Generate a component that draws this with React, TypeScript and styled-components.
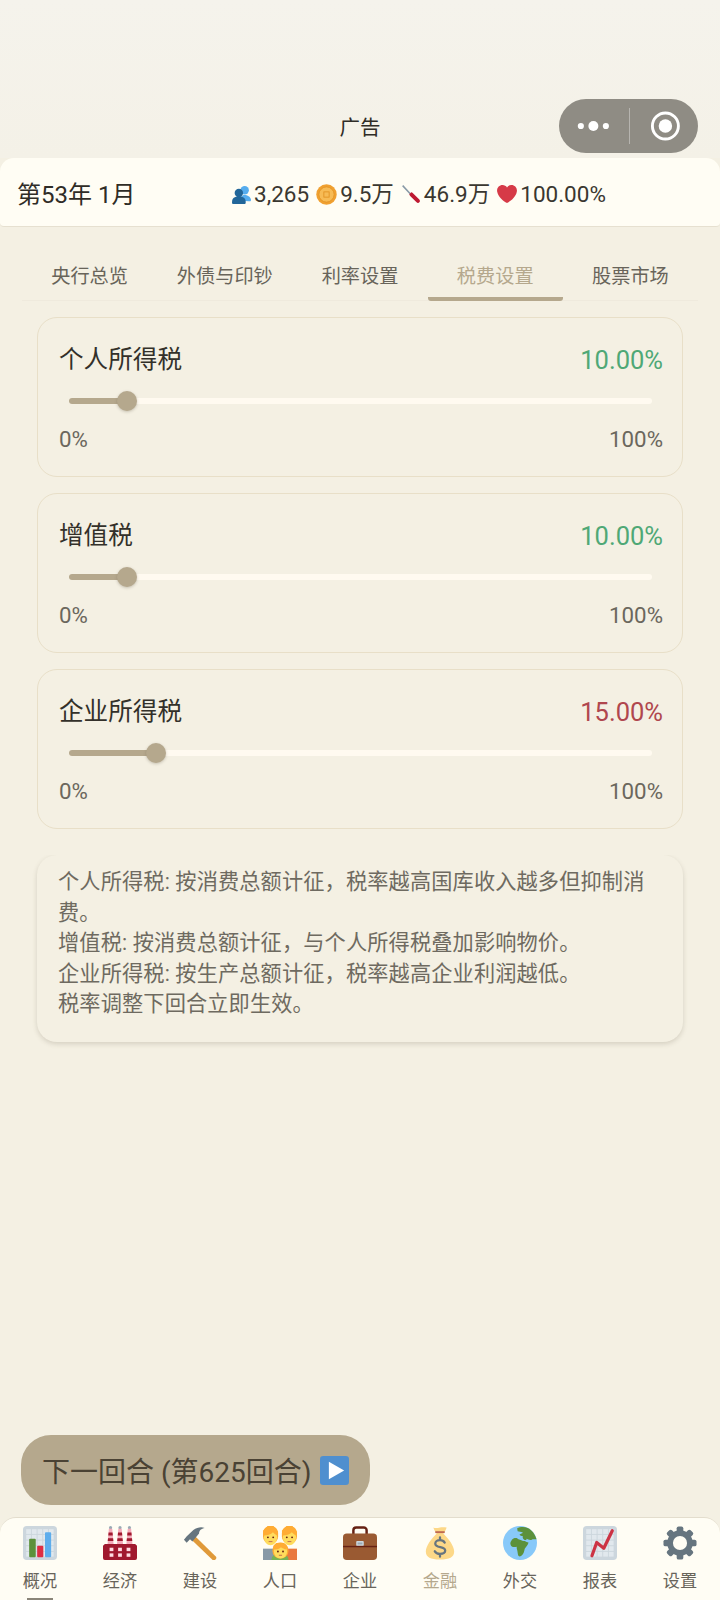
import React from "react";
import styled, { createGlobalStyle } from "styled-components";

const GlobalStyle = createGlobalStyle`
  html, body {
    margin: 0;
    padding: 0;
    background: #f4f0e3;
    font-family: Roboto, "Noto Sans CJK SC", sans-serif;
  }
  * { box-sizing: border-box; }
`;

const Page = styled.div`
  width: 720px;
  height: 1600px;
  display: flex;
  flex-direction: column;
  overflow: hidden;
  background: #f4f0e3;
`;

const TopBar = styled.header`
  display: grid;
  grid-template-columns: 1fr auto 1fr;
  align-items: center;
  height: 158px;
  padding: 99px 22px 5px;
  background: linear-gradient(#f5f3ec, #f4f1e7);
`;

const TopTitle = styled.div`
  grid-column: 2;
  font-size: 20.5px;
  color: #2f2c26;
`;

const Capsule = styled.div`
  grid-column: 3;
  justify-self: end;
  width: 139px;
  height: 54px;
  border-radius: 27px;
  background: #8f8c84;
  display: flex;
  align-items: center;
  padding: 0 17px 0 18px;
`;

const CapsuleDivider = styled.span`
  width: 1.5px;
  height: 36px;
  margin: 0 20px 0 19px;
  background: rgba(255, 255, 255, 0.35);
`;

const StatusBar = styled.div`
  height: 69px;
  display: flex;
  align-items: center;
  padding: 0 17px;
  background: #fffdf4;
  border-radius: 14px 14px 4px 4px;
  border-bottom: 1.5px solid #e6e0d0;
`;

const DateLabel = styled.div`
  font-size: 24px;
  color: #2f2c26;
  width: 118px;
  white-space: nowrap;
`;

const Stats = styled.div`
  flex: 1;
  display: flex;
  justify-content: center;
  gap: 7px;
  padding-top: 4px;
`;

const Stat = styled.div`
  display: flex;
  align-items: center;
  gap: 3px;
  font-size: 22.5px;
  line-height: 28px;
  color: #3a3730;
`;

const Tabs = styled.nav`
  display: flex;
  margin: 28px 22px 0;
  border-bottom: 1px solid #efeadd;
`;

const Tab = styled.div<{ $active?: boolean }>`
  flex: 1;
  height: 46px;
  padding-top: 7px;
  text-align: center;
  font-size: 19.2px;
  line-height: 30px;
  color: ${(p) => (p.$active ? "#b5a88d" : "#68645a")};
  border-bottom: 4px solid ${(p) => (p.$active ? "#b5a88d" : "transparent")};
  border-radius: 0 0 3px 3px;
  margin-bottom: -1px;
`;

const Cards = styled.div`
  display: flex;
  flex-direction: column;
  gap: 16px;
  margin: 16px 37px 0;
`;

const TaxCard = styled.section`
  height: 160px;
  padding: 24px 19px 0 21px;
  border: 1.5px solid #e8dfc8;
  border-radius: 20px;
`;

const TaxHeader = styled.div`
  display: flex;
  justify-content: space-between;
  align-items: center;
  height: 36px;
  font-size: 24.6px;
  line-height: 36px;
  color: #33302a;
`;

const TaxValue = styled.span<{ $color: string }>`
  color: ${(p) => p.$color};
  font-size: 25.5px;
`;

const Slider = styled.div`
  position: relative;
  height: 6px;
  margin: 20px 11px 0 10px;
  border-radius: 3px;
  background: #fffaf0;
`;

const SliderFill = styled.div`
  height: 100%;
  border-radius: 3px;
  background: #b5a88d;
`;

const SliderThumb = styled.div`
  position: absolute;
  top: -7px;
  width: 20px;
  height: 20px;
  margin-left: -10px;
  border-radius: 50%;
  background: #b5a88d;
  box-shadow: 0 1px 3px rgba(90, 80, 60, 0.3);
`;

const Range = styled.div`
  display: flex;
  justify-content: space-between;
  margin-top: 19px;
  font-size: 22.3px;
  line-height: 32px;
  color: #6b675d;
`;

const Note = styled.section`
  margin: 26px 37px 0;
  padding: 12px 21px 18px;
  height: 187px;
  border-radius: 20px;
  font-size: 21.2px;
  letter-spacing: 0.14px;
  line-height: 30.6px;
  color: #6e6a60;
  box-shadow: 0 2px 5px rgba(90, 80, 60, 0.2);
  clip-path: inset(0 -10px -12px -10px);
`;

const Spacer = styled.div`
  flex: 1;
`;

const NextButton = styled.button`
  align-self: flex-start;
  display: flex;
  align-items: center;
  gap: 8px;
  height: 70px;
  width: 349px;
  margin: 0 0 12px 21px;
  padding: 0 0 0 21px;
  border: none;
  border-radius: 30px;
  background: #b5a88d;
  color: #4a4234;
  font-family: inherit;
  font-size: 28px;
  white-space: nowrap;
`;

const BottomNav = styled.nav`
  height: 83px;
  display: grid;
  grid-template-columns: repeat(9, 1fr);
  background: #fffdf4;
  border-top: 1.5px solid #e3ddcd;
  border-radius: 16px 16px 0 0;
`;

const NavItem = styled.div<{ $active?: boolean; $marked?: boolean }>`
  position: relative;
  display: flex;
  flex-direction: column;
  align-items: center;
  padding-top: 8px;
  font-size: 17.2px;
  color: ${(p) => (p.$active ? "#b5a88d" : "#68645a")};
  &::after {
    content: "";
    display: ${(p) => (p.$marked ? "block" : "none")};
    position: absolute;
    left: 27px;
    right: 27px;
    bottom: 0;
    height: 2px;
    background: #8a8578;
  }
`;

const NavLabel = styled.span`
  margin-top: 9px;
  line-height: 24px;
`;

function Dots() {
  return (
    <svg width="34" height="14" viewBox="0 0 34 14">
      <circle cx="4" cy="7" r="3.2" fill="#fff" />
      <circle cx="17" cy="7" r="5.2" fill="#fff" />
      <circle cx="30" cy="7" r="3.2" fill="#fff" />
    </svg>
  );
}

function Target() {
  return (
    <svg width="32" height="32" viewBox="0 0 32 32">
      <circle cx="16" cy="16" r="13.5" fill="none" stroke="#fff" strokeWidth="3" />
      <circle cx="16" cy="16" r="7" fill="#fff" />
    </svg>
  );
}

const Emoji = ({ size, children }: { size: number; children: React.ReactNode }) => (
  <svg width={size} height={size} viewBox="0 0 36 36">
    {children}
  </svg>
);

function GridBg() {
  const cells = [];
  for (let x = 0; x < 5; x++) {
    for (let y = 0; y < 5; y++) {
      cells.push(<rect key={`${x}-${y}`} x={3.4 + x * 6} y={3.4 + y * 6} width="5" height="5" fill="#e1e8ed" />);
    }
  }
  return (
    <>
      <rect width="36" height="36" rx="4" fill="#ccd6dd" />
      {cells}
    </>
  );
}

const BarChartIcon = () => (
  <Emoji size={34}>
    <GridBg />
    <rect x="6.5" y="13.5" width="7" height="19.5" rx="1" fill="#5c913b" />
    <rect x="15" y="21" width="6.5" height="12" rx="1" fill="#dd2e44" />
    <rect x="23.3" y="6.5" width="6.5" height="26.5" rx="1" fill="#5dadec" />
  </Emoji>
);

const FactoryIcon = () => (
  <Emoji size={34}>
    {[8, 18, 28].map((x) => (
      <g key={x}>
        <circle cx={x} cy="1.8" r="1.7" fill="#99aab5" />
        <path d={`M${x - 1.8} 3h3.6l1.4 16h-6.4z`} fill="#f4abba" />
        <path d={`M${x - 2.1} 7h4.2l.3 3h-4.8zM${x - 2.7} 13h5.4l.3 3h-6z`} fill="#a0192e" />
      </g>
    ))}
    <path d="M0 21l2-2h32l2 2v13a2 2 0 0 1-2 2H2a2 2 0 0 1-2-2z" fill="#a0192e" />
    {[7, 16, 25].map((x) => (
      <g key={x} fill="#ffdde2">
        <rect x={x} y="23" width="4" height="3.6" />
        <rect x={x} y="29" width="4" height="3.6" />
      </g>
    ))}
  </Emoji>
);

const HammerIcon = () => (
  <Emoji size={34}>
    <path d="M12 10l23 22.5a2.6 2.6 0 0 1-3.6 3.4L8.500 14z" fill="#e09a3a" />
    <path d="M1 14.5l3-3.6 7-6.6C15 1.2 19.5 0.8 23 2c-3.5.6-6 2.6-6 6l-7 8.500-2.600-2.500-3.500 3.700z" fill="#66757f" />
  </Emoji>
);

const FamilyIcon = () => (
  <Emoji size={34}>
    <path d="M0 24h13v12H0z" fill="#8899a6" />
    <path d="M23 24h13v12H23z" fill="#e9793f" />
    <path d="M9 36c0-5 4-7 9-7s9 2 9 7z" fill="#77b255" />
    {[8, 28].map((x) => (
      <g key={x}>
        <rect x={x - 8} y="0" width="16" height="19" rx="7.500" fill="#ffac33" />
        <ellipse cx={x} cy="12" rx="7" ry="8.500" fill="#ffdc5d" />
        <path d={`M${x - 7.500} 10c4 0 8-1 10-3.500 1.500 1.500 3 3 5 3.500l.5-4-5-6h-6l-5 5z`} fill="#ffac33" />
        <circle cx={x - 2.800} cy="12" r="1" fill="#662113" />
        <circle cx={x + 2.800} cy="12" r="1" fill="#662113" />
        <path d={`M${x - 2} 16.500h4`} stroke="#c1694f" strokeWidth="1" />
      </g>
    ))}
    <rect x="10" y="17.500" width="17" height="17" rx="8" fill="#ffac33" />
    <ellipse cx="18.500" cy="27" rx="7" ry="7.500" fill="#ffdc5d" />
    <path d="M11 25c3 0 6-.5 8-2.500 1.500 1 3.500 2 6 2.500v-4l-3-3h-8l-3 3z" fill="#ffac33" />
    <circle cx="15.800" cy="27" r="1" fill="#662113" />
    <circle cx="21.200" cy="27" r="1" fill="#662113" />
    <path d="M16.800 31h3.400" stroke="#c1694f" strokeWidth="1" />
  </Emoji>
);

const BriefcaseIcon = () => (
  <Emoji size={34}>
    <path d="M11 9V4.500A3 3 0 0 1 14 1.500h8a3 3 0 0 1 3 3V9" fill="none" stroke="#662113" strokeWidth="2.600" />
    <rect x="0" y="8" width="36" height="28" rx="4" fill="#9a5a32" />
    <rect x="0" y="21" width="36" height="1.500" fill="#662113" />
    <rect x="14" y="16" width="8" height="5" rx="1" fill="#ccd6dd" />
    <rect x="15.500" y="17.500" width="5" height="2" fill="#99aab5" />
  </Emoji>
);

const MoneyBagIcon = () => (
  <Emoji size={34}>
    <path d="M11 1.500c2 1 4 .5 7 0s5 0 7 0c-.5 2.500-2.500 5-3.500 6.500 5 5 11.500 13 11.500 19 0 6-5 8.500-15 8.500S3 33 3 27C3 21 9.500 13 14.500 8 13.500 6.500 11.500 4 11 1.500z" fill="#fdd888" />
    <path d="M13 6.500h10" stroke="#bf6952" strokeWidth="2" />
    <path d="M23 17.500c-1-1.500-3-2.500-5-2.500-3 0-5 1.500-5 3.700 0 5 10.500 2.500 10.500 7.300 0 2-2.200 3.500-5.500 3.500-2.500 0-4.500-1-5.500-2.700M18 12v3M18 29.500v3" fill="none" stroke="#67757f" strokeWidth="2.400" strokeLinecap="round" />
  </Emoji>
);

const GlobeIcon = () => (
  <Emoji size={34}>
    <circle cx="18" cy="18" r="18" fill="#88c9f9" />
    <path d="M15 2.500c3-2 8-2 11-.5 5 2 8 7 9.500 12-2 .5-3.500-.5-5 .5-2 .5-4 0-5.500-1 0 1.500-1 1.500-2.500 1-1.500-1-2-3-1.500-4-1.500 0-3 0-3.500-1.500 1.500-.5 3-1 3.500-2-2-1-4-1-5.500-1.500z" fill="#5c913b" />
    <path d="M9 15c1.500-2 4-2.500 6-2 .5 1 2 1.500 3 1.500 2 .5 3 1.500 5 1.500 1.500 1 2.500 1.500 4 1.500-.5 2.500-2.500 4.500-4 6.500-.5 2.500-1 5.500-3.500 7.500-1.500 1-3 1-3.500-.5-.5-2-.5-3.500-1-5.500-.5-1.500-.5-2.500-.5-3.500-3 .5-6 .5-6.500-2.500-.5-1.500 0-3 1-4z" fill="#5c913b" />
  </Emoji>
);

const TrendIcon = () => (
  <Emoji size={34}>
    <GridBg />
    <path d="M9.500 31.500L14.500 17.500L22 23.500L31 5" fill="none" stroke="#cc3344" strokeWidth="3.400" strokeLinecap="round" strokeLinejoin="round" />
  </Emoji>
);

const GearIcon = () => (
  <Emoji size={34}>
    {[0, 45, 90, 135].map((a) => (
      <rect key={a} x="14.500" y="0.500" width="7" height="35" rx="2" fill="#66757f" transform={`rotate(${a} 18 18)`} />
    ))}
    <circle cx="18" cy="18" r="10" fill="none" stroke="#66757f" strokeWidth="7" />
    <circle cx="18" cy="18" r="7.500" fill="#fffdf4" />
  </Emoji>
);

const PlayIcon = () => (
  <Emoji size={29}>
    <rect width="36" height="36" rx="4" fill="#4f8fcf" />
    <path d="M11 7l19 11-19 11z" fill="#fff" />
  </Emoji>
);

const PeopleIcon = () => (
  <Emoji size={19}>
    <circle cx="24" cy="10" r="8" fill="#55acee" />
    <path d="M16 30c0-8 3-11 8-11s11 3 12 9c0 3-2 3-4 3z" fill="#55acee" />
    <circle cx="13" cy="15" r="8" fill="#269" />
    <path d="M0 33c0-8 5-11 13-11s13 3 13 11c0 2-1 3-3 3H3c-2 0-3-1-3-3z" fill="#269" />
  </Emoji>
);

const CoinIcon = () => (
  <Emoji size={21}>
    <circle cx="18" cy="18" r="17.500" fill="#f0a030" />
    <circle cx="18" cy="18" r="13" fill="#f7bb55" stroke="#e08f1f" strokeWidth="1.200" />
    <rect x="13.500" y="13.500" width="9" height="9" fill="none" stroke="#e08f1f" strokeWidth="1.400" />
  </Emoji>
);

const ScrewdriverIcon = () => (
  <Emoji size={20}>
    <path d="M2 4l2-2 14 15-2 2z" fill="#8899a6" />
    <path d="M15 18.500l3.500-3.500c1 0 2 .5 3 1.500l11 11c2 2 2 4 .5 5.500s-3.500 1.500-5.500-.5l-11-11c-1-1-1.500-2-1.500-3z" fill="#be1931" />
  </Emoji>
);

const HeartIcon = () => (
  <Emoji size={20}>
    <path d="M35.885 11.833c0-5.45-4.418-9.868-9.867-9.868-3.308 0-6.227 1.633-8.018 4.129-1.791-2.496-4.71-4.129-8.017-4.129-5.45 0-9.868 4.417-9.868 9.868 0 .772.098 1.52.266 2.241C1.751 22.587 11.216 31.568 18 34.034c6.783-2.466 16.249-11.447 17.617-19.959.17-.721.268-1.469.268-2.242z" fill="#d63a47" />
  </Emoji>
);

const stats = [
  { icon: <PeopleIcon />, text: "3,265" },
  { icon: <CoinIcon />, text: "9.5万" },
  { icon: <ScrewdriverIcon />, text: "46.9万" },
  { icon: <HeartIcon />, text: "100.00%" },
];

const tabs = ["央行总览", "外债与印钞", "利率设置", "税费设置", "股票市场"];

const taxes = [
  { name: "个人所得税", value: 10, color: "#4fa876" },
  { name: "增值税", value: 10, color: "#4fa876" },
  { name: "企业所得税", value: 15, color: "#b0474e" },
];

const notes = [
  "个人所得税: 按消费总额计征，税率越高国库收入越多但抑制消费。",
  "增值税: 按消费总额计征，与个人所得税叠加影响物价。",
  "企业所得税: 按生产总额计征，税率越高企业利润越低。",
  "税率调整下回合立即生效。",
];

const navItems = [
  { label: "概况", icon: <BarChartIcon />, marked: true },
  { label: "经济", icon: <FactoryIcon /> },
  { label: "建设", icon: <HammerIcon /> },
  { label: "人口", icon: <FamilyIcon /> },
  { label: "企业", icon: <BriefcaseIcon /> },
  { label: "金融", icon: <MoneyBagIcon />, active: true },
  { label: "外交", icon: <GlobeIcon /> },
  { label: "报表", icon: <TrendIcon /> },
  { label: "设置", icon: <GearIcon /> },
];

export default function App() {
  return (
    <Page>
      <GlobalStyle />
      <TopBar>
        <TopTitle>广告</TopTitle>
        <Capsule>
          <Dots />
          <CapsuleDivider />
          <Target />
        </Capsule>
      </TopBar>
      <StatusBar>
        <DateLabel>第53年 1月</DateLabel>
        <Stats>
          {stats.map((s) => (
            <Stat key={s.text}>
              {s.icon}
              {s.text}
            </Stat>
          ))}
        </Stats>
      </StatusBar>
      <Tabs>
        {tabs.map((t) => (
          <Tab key={t} $active={t === "税费设置"}>
            {t}
          </Tab>
        ))}
      </Tabs>
      <Cards>
        {taxes.map((t) => (
          <TaxCard key={t.name}>
            <TaxHeader>
              <span>{t.name}</span>
              <TaxValue $color={t.color}>{t.value.toFixed(2)}%</TaxValue>
            </TaxHeader>
            <Slider>
              <SliderFill style={{ width: `${t.value}%` }} />
              <SliderThumb style={{ left: `${t.value}%` }} />
            </Slider>
            <Range>
              <span>0%</span>
              <span>100%</span>
            </Range>
          </TaxCard>
        ))}
      </Cards>
      <Note>
        {notes.map((n) => (
          <div key={n}>{n}</div>
        ))}
      </Note>
      <Spacer />
      <NextButton>
        下一回合 (第625回合)
        <PlayIcon />
      </NextButton>
      <BottomNav>
        {navItems.map((n) => (
          <NavItem key={n.label} $active={n.active} $marked={n.marked}>
            {n.icon}
            <NavLabel>{n.label}</NavLabel>
          </NavItem>
        ))}
      </BottomNav>
    </Page>
  );
}
